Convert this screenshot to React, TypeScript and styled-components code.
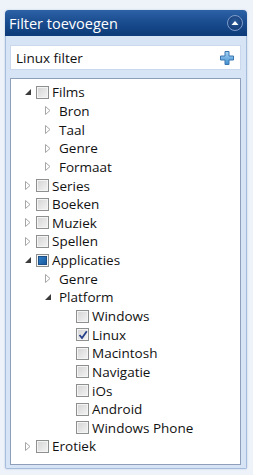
import styled, { createGlobalStyle } from "styled-components";

const GlobalStyle = createGlobalStyle`
  body {
    margin: 0;
    background: #eef3fa;
    font-family: "Segoe UI", "Open Sans", "Noto Sans", sans-serif;
  }
`;

const SPanel = styled.div`
  margin: 10px 6px 6px 5px;
  width: 242px;
  height: 459px;
  display: flex;
  flex-direction: column;
  border-radius: 4px 4px 2px 2px;
  box-shadow: 0 0 2px rgba(80, 110, 160, 0.35);
`;

const SHeader = styled.div`
  height: 26px;
  display: flex;
  align-items: center;
  justify-content: space-between;
  padding: 0 4px 0 4px;
  border-radius: 4px 4px 0 0;
  background: linear-gradient(#2d62a6 0%, #1a4d90 45%, #0d3a78 100%);
  color: #fff;
  font-size: 14.5px;
`;

const SCollapse = styled.div`
  width: 14px;
  height: 14px;
  border-radius: 50%;
  border: 1px solid #7f9ccc;
  background: radial-gradient(circle at 50% 40%, #2c5a98, #0e3570);
  display: flex;
  align-items: center;
  justify-content: center;
`;

const SBody = styled.div`
  flex: 1;
  display: flex;
  flex-direction: column;
  gap: 8px;
  padding: 9px 5px 3px 4px;
  background: #d6e4f6;
  border: 1px solid #a6bcdc;
  border-top: none;
  border-radius: 0 0 2px 2px;
`;

const SSearch = styled.div`
  height: 23px;
  display: flex;
  align-items: center;
  justify-content: space-between;
  padding: 0 5px 0 5px;
  background: #fff;
  border: 1px solid #c9d8ec;
  font-size: 13.5px;
  color: #111;
`;

const STree = styled.div`
  flex: 1;
  background: #fff;
  border: 1px solid #8d9fba;
  padding: 4px 0 0 0;
`;

const SRow = styled.div<{ $depth: number }>`
  height: 18.65px;
  display: flex;
  align-items: center;
  padding-left: ${(p) => 13 + p.$depth * 20}px;
  font-size: 13.5px;
  color: #111;
`;

const SExpander = styled.span`
  width: 12px;
  height: 13px;
  display: flex;
  align-items: center;
  justify-content: flex-start;
  flex-shrink: 0;
`;

const SBox = styled.span<{ $state: string }>`
  width: 11px;
  height: 11px;
  border: 1px solid #8e8f8f;
  background: linear-gradient(135deg, #d4d4d4, #f4f4f4);
  box-shadow: inset 0 0 0 1px #f4f4f4;
  margin-right: 3px;
  display: flex;
  align-items: center;
  justify-content: center;
  flex-shrink: 0;
`;

const SPartial = styled.span`
  width: 7px;
  height: 7px;
  background: linear-gradient(135deg, #2f7fc9, #1a5c9e);
  border: 1px solid #1b4f85;
`;

const SLabel = styled.span<{ $gap?: boolean }>`
  margin-left: ${(p) => (p.$gap ? 3 : 0)}px;
  white-space: nowrap;
`;

type Node = { label: string; depth: number; exp?: "open" | "closed"; box?: "off" | "on" | "partial" };

const nodes: Node[] = [
  { label: "Films", depth: 0, exp: "open", box: "off" },
  { label: "Bron", depth: 1, exp: "closed" },
  { label: "Taal", depth: 1, exp: "closed" },
  { label: "Genre", depth: 1, exp: "closed" },
  { label: "Formaat", depth: 1, exp: "closed" },
  { label: "Series", depth: 0, exp: "closed", box: "off" },
  { label: "Boeken", depth: 0, exp: "closed", box: "off" },
  { label: "Muziek", depth: 0, exp: "closed", box: "off" },
  { label: "Spellen", depth: 0, exp: "closed", box: "off" },
  { label: "Applicaties", depth: 0, exp: "open", box: "partial" },
  { label: "Genre", depth: 1, exp: "closed" },
  { label: "Platform", depth: 1, exp: "open" },
  { label: "Windows", depth: 2, box: "off" },
  { label: "Linux", depth: 2, box: "on" },
  { label: "Macintosh", depth: 2, box: "off" },
  { label: "Navigatie", depth: 2, box: "off" },
  { label: "iOs", depth: 2, box: "off" },
  { label: "Android", depth: 2, box: "off" },
  { label: "Windows Phone", depth: 2, box: "off" },
  { label: "Erotiek", depth: 0, exp: "closed", box: "off" },
];

const Arrow = ({ open }: { open: boolean }) =>
  open ? (
    <svg width="8" height="8" viewBox="0 0 8 8">
      <path d="M7 1 L7 7 L1 7 Z" fill="#3c3c3c" />
    </svg>
  ) : (
    <svg width="8" height="9" viewBox="0 0 8 9">
      <path d="M1.5 0.5 L6 4.5 L1.5 8.5 Z" fill="#fff" stroke="#a6a6a6" strokeWidth="1" />
    </svg>
  );

const Check = () => (
  <svg width="10" height="10" viewBox="0 0 10 10">
    <path d="M1.5 5 L4 8 L8.8 1.2" fill="none" stroke="#27408b" strokeWidth="1.8" />
  </svg>
);

const Plus = () => (
  <svg width="16" height="16" viewBox="0 0 16 16">
    <defs>
      <linearGradient id="pg" x1="0" y1="0" x2="0" y2="1">
        <stop offset="0" stopColor="#a9d5f5" />
        <stop offset="1" stopColor="#3f8fd0" />
      </linearGradient>
    </defs>
    <path
      d="M6 1.5 H10 V6 H14.5 V10 H10 V14.5 H6 V10 H1.5 V6 H6 Z"
      fill="url(#pg)"
      stroke="#3a76b0"
      strokeWidth="1"
    />
  </svg>
);

const App = () => (
  <>
    <GlobalStyle />
    <SPanel>
      <SHeader>
        <span>Filter toevoegen</span>
        <SCollapse>
          <svg width="8" height="6" viewBox="0 0 8 6">
            <path d="M0.5 5 L4 1 L7.5 5 Z" fill="#fff" />
          </svg>
        </SCollapse>
      </SHeader>
      <SBody>
        <SSearch>
          <span>Linux filter</span>
          <Plus />
        </SSearch>
        <STree>
          {nodes.map((n, i) => (
            <SRow key={i} $depth={n.depth}>
              <SExpander>{n.exp && <Arrow open={n.exp === "open"} />}</SExpander>
              {n.box && (
                <SBox $state={n.box}>
                  {n.box === "on" && <Check />}
                  {n.box === "partial" && <SPartial />}
                </SBox>
              )}
              <SLabel $gap={!n.box}>{n.label}</SLabel>
            </SRow>
          ))}
        </STree>
      </SBody>
    </SPanel>
  </>
);

export default App;
